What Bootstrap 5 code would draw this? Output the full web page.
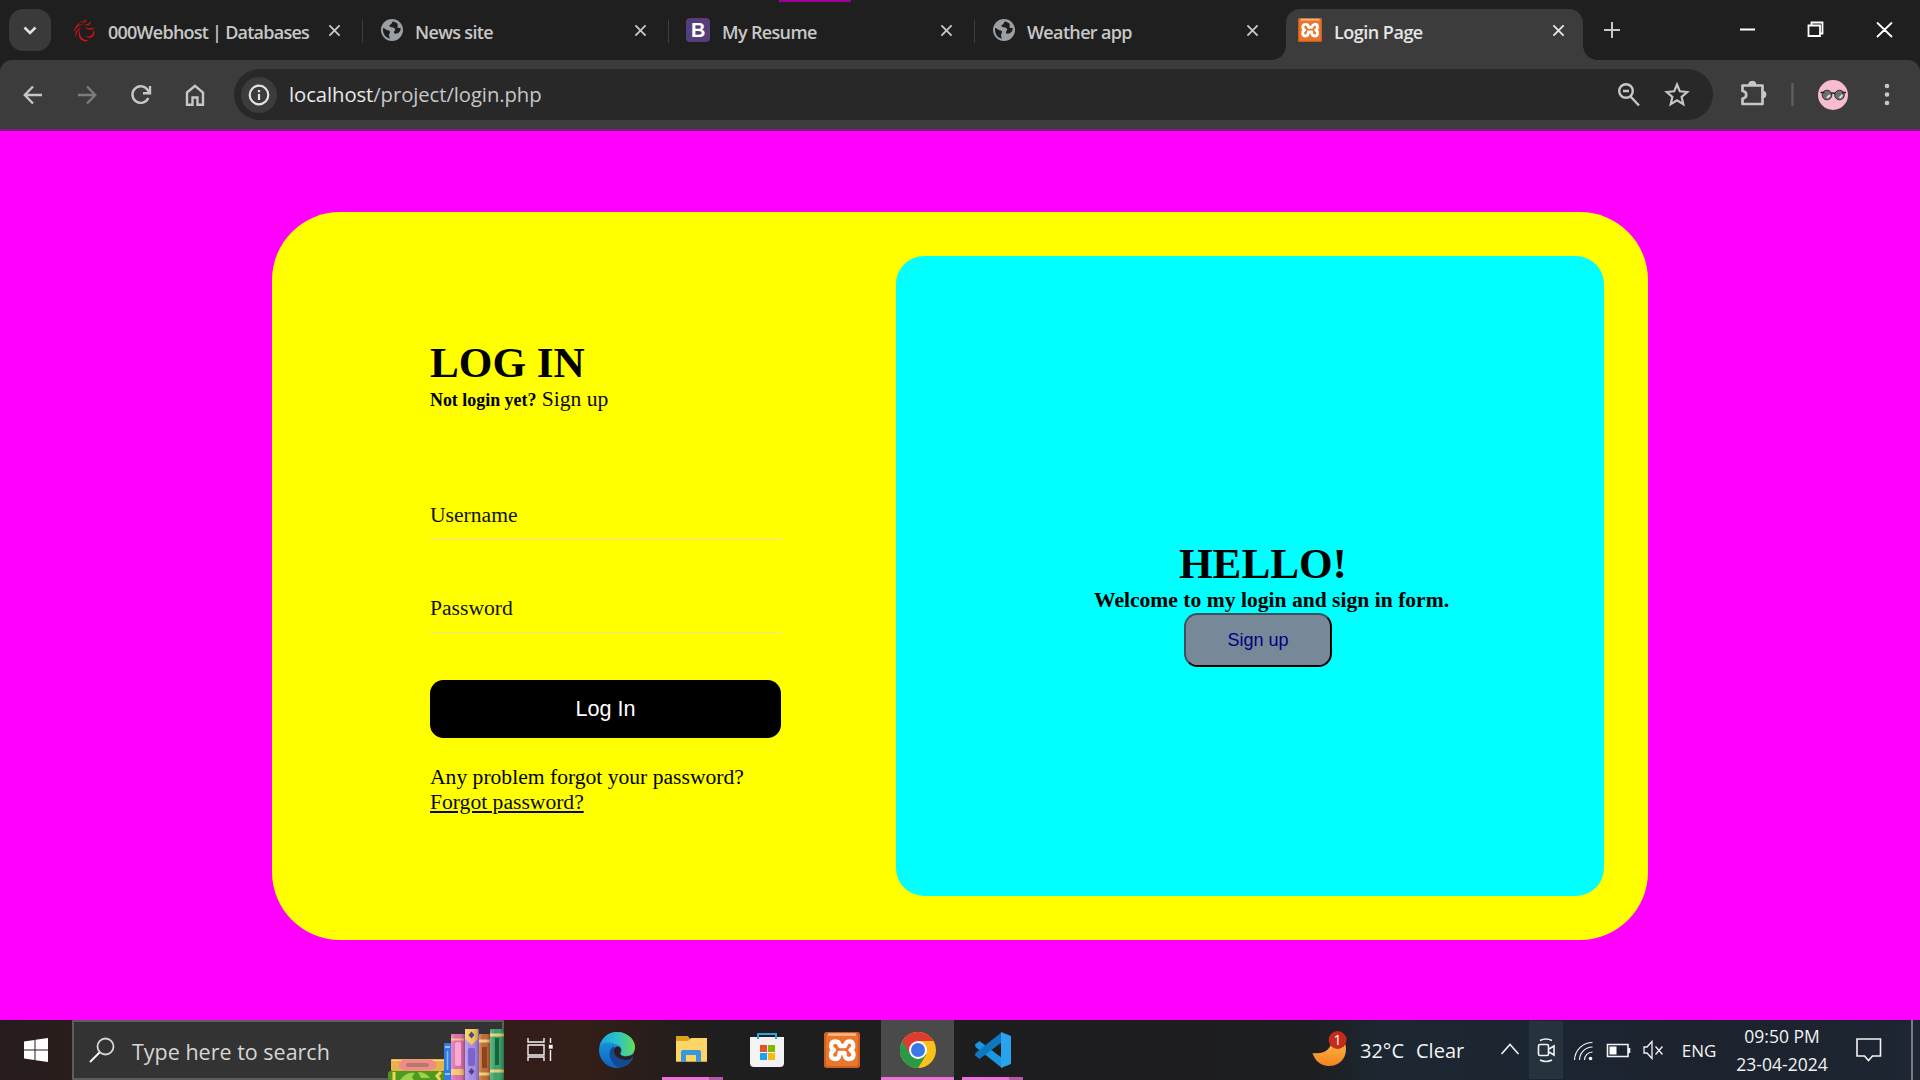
<!DOCTYPE html>
<html lang="en">
<head>
<meta charset="utf-8">
<title>Login Page</title>
<link href="https://cdn.jsdelivr.net/npm/bootstrap@5.3.0/dist/css/bootstrap.min.css" rel="stylesheet">
<style>
body{width:1920px;height:1080px;overflow:hidden;background:#f0f;font-family:"Open Sans","Noto Sans",sans-serif}
svg{display:block;flex:none}
.ln{fill:none;stroke:currentColor}
/* browser chrome */
.strip{height:60px;background:#1f1f1f;color:#c7c7c7}
.recording{top:0;left:779px;width:72px;height:2px;background:#9c0096}
.tabsearch{width:42px;height:42px;margin:9px 0 0 9px;border-radius:14px;background:#3a3a3a;color:#e3e3e3}
.btab{width:306px;height:51px;margin-top:9px;padding-left:18px;font-size:18px;font-weight:600;letter-spacing:-.65px;flex:none}
.btab .fav{margin-top:10px}
.btab .fav24{margin:9px 0 0 -1px}
.btab .tname{width:231px;flex:none;padding-left:12px;line-height:26px;margin-top:10px;white-space:nowrap}
.btab .shut{margin-top:15px}
.btab .rule{width:3px;height:24px;background:#3e3e3e;border-radius:2px;margin:10px 0 0 21px}
.btab.first{width:312px;padding-left:22px}
.btab.first .tname{width:232px;letter-spacing:-.76px}
.btab.current{width:297px;margin-left:5px;padding-left:13px;background:#3c3c3c;color:#e6e6e6;border-radius:14px 14px 0 0;position:relative;letter-spacing:-.5px}
.btab.current:before,.btab.current:after{content:"";position:absolute;bottom:0;width:14px;height:14px}
.btab.current:before{left:-14px;background:radial-gradient(circle at 0 0,#1f1f1f 13.5px,#3c3c3c 14px)}
.btab.current:after{right:-14px;background:radial-gradient(circle at 100% 0,#1f1f1f 13.5px,#3c3c3c 14px)}
.toolbar{height:71px;background:#3c3c3c;color:#c7c7c7;border-bottom:2px solid #7a1f7c;border-radius:12px 12px 0 0;padding-left:21px}
.cap{background:#1f1f1f}
.toolbar>.nav-ic{width:24px;margin-right:30px}
.omni{width:1479px;flex:none;height:51px;border-radius:26px;background:#282828;margin-left:-3px;padding-left:8px;font-size:20.3px}
.info{width:36px;height:36px;border-radius:50%;background:#3c3c3c;color:#e3e3e3;margin-left:-1px}
.url{width:1340px;padding-left:12px;line-height:30px;margin-top:-2px;color:#c7c7c7;letter-spacing:-.08px}
.url b{font-weight:400;color:#e8e8e8}
/* page */
.page{height:889px;background:#f0f;font-family:"Liberation Serif",serif;font-size:21.6px;line-height:25px;color:#000}
.panel{width:1376px;height:728px;border-radius:68px;background:#ff0;padding:44px}
.loginform{width:580px;padding:82px 0 0 114px}
.bigtitle{font-size:43.2px;line-height:50px;font-weight:700;margin:0;height:49px}
.hint{font-size:17.9px;font-weight:700}
.fieldbox{width:351px;height:37px;border-bottom:1.4px solid #e6e6a0;color:#111}
.loginbtn{width:351px;height:58px;border-radius:13.5px;background:#000;color:#fff;font:21.6px "Liberation Sans",sans-serif;border:0}
.forgot{color:#0a0a28}
.hello{width:708px;height:640px;border-radius:28px;background:#0ff;padding:283px 0 0 198px}
.signbtn{width:148px;height:54px;border:2.5px outset #000;border-color:#405058 #000 #000 #405058;border-radius:13.5px;background:#789;color:#000080;font:18px "Liberation Sans",sans-serif;margin-left:90px;padding:1px 0 0}
/* taskbar */
.task{height:60px;color:#f3f3f3;background:linear-gradient(90deg,#261c1d 0,#2a1d1c 72px,#321d19 510px,#331e18 590px,#241d1c 670px,#1e1e1f 740px,#1d1d1f 1170px,#1d1f22 1320px,#1c2731 1380px,#1b2632 1550px,#1c222e 1700px,#1d2632 1920px)}
.slot{height:60px;flex:none;display:flex;align-items:center;justify-content:center}
.find{width:432px;flex:none;height:60px;border:2px solid #5d5d5d;background:#333;padding-left:15px;color:#d6d6d6;font-size:21.5px}
.find .ask{width:272px;flex:none;padding-left:17px;line-height:30px;margin-top:3px;white-space:nowrap}
.run{box-shadow:inset 0 -3px #f06fdc}
.run2{background:linear-gradient(90deg,#f06fdc 0 47px,#b357a6 47px 61px) no-repeat 0 57px/61px 3px}
.wtext{font-size:20px;white-space:pre}
.clock{font-size:17.5px;line-height:28px;text-align:center;white-space:nowrap}
</style>
<script src="https://cdn.jsdelivr.net/npm/bootstrap@5.3.0/dist/js/bootstrap.bundle.min.js"></script>
</head>
<body class="d-flex flex-column m-0">
<svg width="0" height="0" class="position-absolute">
<defs>
<symbol id="x" viewBox="0 0 14 14"><path d="M1.500 1.500l11 11M12.500 1.500l-11 11" fill="none" stroke="currentColor" stroke-width="2"/></symbol>
<symbol id="globe" viewBox="0 0 22 22"><circle cx="11" cy="11" r="11" fill="#9aa0a6"/><path d="M2 9c2 0 3 2.200 5.500 2.500 1.500.2 2 1.500 1 3-.8 1.200-.5 3 .5 5C5 19 1.500 15.500 2 9zM12 2.500c-2 1-.5 2.500-2.500 3C8 6 8 7.500 9.500 8c2 .7 3.500.3 4.500 1.800 1 1.700-1.500 2.200-1 4 .4 1.200 2.500 1 4.200.2 2-1 2.800-3 2.300-5.500-1.500 1-3 .8-3-1 0-1.500 1-1.800-.5-3.200C15 3.500 13.500 2.800 12 2.500z" fill="#1f1f1f"/></symbol>
<symbol id="xampp" viewBox="0 0 36 36"><rect width="36" height="36" rx="3" fill="#e8762c"/><rect x="1" y="1" width="34" height="34" rx="3" fill="none" stroke="#c75a1a" stroke-width="1.500"/><path d="M5 2.500h26" stroke="#f7b98d" stroke-width="2.500" stroke-linecap="round"/><path d="M11.500 9.500c-5 0-6 6-1.500 8.500-4.500 2.500-4 9 1.500 9 3.500 0 4-3 4-6h5c0 4 1 6 4.500 6 5.500 0 6-6.500 1.500-9 4.500-2.500 3-9-1.500-8.500-3 .3-3.500 2-4 4.500h-5c-.5-3-1.500-4.500-4.500-4.500z" fill="none" stroke="#fff" stroke-width="4.300" stroke-linejoin="round"/></symbol>
</defs></svg>

<header class="flex-shrink-0 position-relative">
<div class="recording position-absolute"></div>
<div class="strip d-flex">
 <div class="tabsearch d-flex align-items-center justify-content-center"><svg width="14" height="9" viewBox="0 0 14 9"><path class="ln" stroke-width="2.500" d="M1.500 1.500L7 7l5.500-5.500"/></svg></div>
 <div class="btab first d-flex">
  <svg class="fav" width="23" height="23" viewBox="0 0 24 24" fill="#d01217"><path d="M7.500 11C6 17 9 22 17 22.500 9 26 3 18 7.500 11z"/><path d="M12.500 17.500C18 20 22 16 21.500 10.500 25 17 18 23 12.500 17.500z"/><path d="M22.500 8.500C20 12.500 14 12 12.500 7.500 15 10 19 10.300 22.500 8.500z"/><path d="M18.500 2.500C19 6 15 8 12 5.500 15 5.500 17 4.500 18.500 2.500z"/><path d="M14 1C13 3.500 11 4 9.500 4.500 11 3.500 11.500 2 12 1zM1 14C1 8 5 5 11 6 6 6.500 3 9 1 14zM2.500 19C2 14 4 10 8.500 9 5 11.500 4 14.500 2.500 19zM3 8C4 5 6 4 9 4.500 6.500 5 5 6 3 8zM6.500 3Q9 1.500 10.500 3.500 8.500 2.800 6.500 3z"/></svg>
  <span class="tname">000Webhost | Databases</span>
  <svg class="shut" width="13" height="13"><use href="#x"/></svg>
  <i class="rule"></i>
 </div>
 <div class="btab d-flex"><svg class="fav" width="22" height="22"><use href="#globe"/></svg><span class="tname">News site</span><svg class="shut" width="13" height="13"><use href="#x"/></svg><i class="rule"></i></div>
 <div class="btab d-flex"><svg class="fav24" width="24" height="24" viewBox="0 0 24 24"><rect width="24" height="24" rx="4" fill="#563d7c"/><text x="12" y="19" text-anchor="middle" font-family="Liberation Sans" font-size="20" font-weight="700" fill="#fff">B</text></svg><span class="tname" style="width:230px">My Resume</span><svg class="shut" width="13" height="13"><use href="#x"/></svg><i class="rule"></i></div>
 <div class="btab d-flex"><svg class="fav" width="22" height="22"><use href="#globe"/></svg><span class="tname">Weather app</span><svg class="shut" width="13" height="13"><use href="#x"/></svg></div>
 <div class="btab current d-flex"><svg class="fav24" width="24" height="24"><use href="#xampp"/></svg><span class="tname" style="width:230px">Login Page</span><svg class="shut" width="13" height="13"><use href="#x"/></svg></div>
 <div class="d-flex align-items-center"><svg width="336" height="60" viewBox="1584 0 336 60" class="ln" color="#fff"><path d="M1605 30h16M1613 22v16" stroke="#c7c7c7" stroke-width="2"/><path d="M1741 29.500h15" stroke-width="2"/><path d="M1809.500 25.500h11.500v10.500h-11.500zM1812.500 25v-2.500h11v11h-2.500M1878 22.500l15 14.500M1893 22.500l-15 14.500" stroke-width="1.800"/></svg></div>
</div>
<div class="cap"><div class="toolbar d-flex align-items-center">
 <svg class="nav-ic" width="24" height="24" viewBox="0 0 24 24"><path class="ln" stroke-width="2.400" d="M21 12H4M12 3.500L3.800 12l8.200 8.500"/></svg>
 <svg class="nav-ic" width="24" height="24" viewBox="0 0 24 24" color="#7c7c7c"><path class="ln" stroke-width="2.400" d="M3 12h17M12 3.500l8.200 8.500-8.200 8.500"/></svg>
 <svg class="nav-ic" width="24" height="24" viewBox="0 0 24 24"><path class="ln" stroke-width="2.400" d="M19.300 15A8.300 8.300 0 1 1 19 7.500L21 10M21 3v7.200h-7"/></svg>
 <svg class="nav-ic" width="24" height="24" viewBox="0 0 24 24"><path class="ln" stroke-width="2.400" d="M4 9.500L12 2.800l8 6.700V21.800h-5.500v-7.300h-5v7.300H4z"/></svg>
 <div class="omni d-flex align-items-center">
  <span class="info d-flex align-items-center justify-content-center"><svg width="22" height="22" viewBox="0 0 22 22"><circle class="ln" cx="11" cy="11" r="9.300" stroke-width="2.200"/><path class="ln" d="M11 10v6M11 6v2.200" stroke-width="2.200"/></svg></span>
  <span class="url"><b>localhost</b>/project/login.php</span>
  <svg width="75" height="26" viewBox="0 0 75 26"><path class="ln" stroke-width="2.400" d="M13.500 14.500l8.500 9M6 9h6"/><circle class="ln" cx="9" cy="9" r="6.800" stroke-width="2.400"/><path class="ln" stroke-width="2.200" d="M60 2.500l2.800 6.800 7.400.7-5.600 4.900 1.700 7.200-6.300-3.800-6.300 3.800 1.700-7.200-5.600-4.900 7.400-.7z"/></svg>
 </div>
 <svg width="207" height="50" viewBox="1713 70 207 50"><path class="ln" stroke-width="2.700" stroke-linejoin="round" d="M1742.500 85.500h20v18.500h-20v-5.500c5-.5 5-7 0-7.500z"/><path d="M1748.500 85a3.800 3.800 0 0 1 7.600 0zM1762.500 91a3.500 3.500 0 0 1 0 7z" fill="#c7c7c7" stroke="#c7c7c7"/><path d="M1792.500 83v23" stroke="#5c5c5c" stroke-width="2.500"/><circle cx="1833" cy="95" r="15" fill="#f8bbd0"/><g fill="#6a7074" stroke="#303030"><circle cx="1827" cy="95" r="4.800"/><circle cx="1839.500" cy="95" r="4.800"/></g><path d="M1827 98l3-3M1839.500 98l3-3" stroke="#ddd" stroke-width="2"/><path d="M1820.500 92.500h4M1831 93.500q2-1 4 0M1842 92.500h4" fill="none" stroke="#222" stroke-width="1.500"/><g fill="currentColor"><circle cx="1887" cy="86" r="2.300"/><circle cx="1887" cy="94.500" r="2.300"/><circle cx="1887" cy="103" r="2.300"/></g></svg>
</div></div>
</header>

<main class="page flex-shrink-0 d-flex align-items-center justify-content-center">
<div class="panel d-flex">
 <form class="loginform">
  <h1 class="bigtitle">LOG IN</h1>
  <div style="height:25px"><span class="hint">Not login yet?</span> <span class="forgot">Sign up</span></div>
  <div class="fieldbox" style="margin-top:91px">Username</div>
  <div class="fieldbox" style="margin-top:56px">Password</div>
  <button type="button" class="loginbtn d-block" style="margin-top:47px">Log In</button>
  <div style="margin-top:27px">Any problem forgot your password?</div>
  <a class="forgot text-decoration-underline">Forgot password?</a>
 </form>
 <section class="hello">
  <h1 class="bigtitle" style="padding-left:85px">HELLO!</h1>
  <div class="fw-bold">Welcome to my login and sign in form.</div>
  <button type="button" class="signbtn d-block">Sign up</button>
 </section>
</div>
</main>

<footer class="task flex-shrink-0 d-flex">
 <div class="slot" style="width:72px"><svg width="28" height="24" viewBox="-2 0 28 24" fill="#fff"><path d="M0 3.500l10.500-1.500v9.500H0zM11.500 1.800L24 0v11.500H11.500zM0 12.500h10.500V22L0 20.500zM11.500 12.500H24V24l-12.500-1.800z"/></svg></div>
 <div class="find d-flex align-items-center">
  <svg width="26" height="26" viewBox="0 0 26 26"><circle class="ln" cx="16.500" cy="9.500" r="8" stroke-width="1.800" stroke="#fff"/><path d="M10.500 15.500L1 25" stroke="#fff" stroke-width="1.800"/></svg>
  <span class="ask">Type here to search</span>
  <svg width="118" height="52" viewBox="387 1028 118 52" class="align-self-end" style="margin-bottom:-2px">
   <defs><linearGradient id="sh"><stop stop-color="#fff" stop-opacity=".25"/><stop offset=".4" stop-color="#fff" stop-opacity="0"/><stop offset="1" stop-color="#000" stop-opacity=".3"/></linearGradient></defs>
   <rect x="391" y="1059" width="54" height="12" rx="1" fill="#e6b34a"/><path d="M391 1060.500h54" stroke="#f7dc7e"/><path d="M403 1059.500h28l5 3v5l-5 3h-28l-4-3v-5z" fill="#f08b86"/><rect x="406" y="1063" width="23" height="4" rx="2" fill="#b47a70"/>
   <rect x="388" y="1071" width="57" height="9" rx="3" fill="#4f9a1e"/><path d="M400 1080q7-9 15-7-5 4-1 7zM418 1072q8 0 12 6h-9z" fill="#9bd24a"/><path d="M394 1072v8M441 1072l-4 4 3 4" stroke="#f1d35e" stroke-width="3" fill="none"/>
   <rect x="444" y="1043" width="7" height="37" rx="1" fill="#2f7de0"/><path d="M445 1047h5M445 1074h5" stroke="#8fc4ff" stroke-width="2"/><path d="M447.500 1051v19" stroke="#82b6f7" stroke-width="1.500"/>
   <rect x="451" y="1034" width="14" height="46" rx="1" fill="#e069ac"/><path d="M451 1039.500h13" stroke="#f6c56c" stroke-width="2"/><path d="M451 1072h13" stroke="#f6c56c" stroke-width="6"/><rect x="451" y="1034" width="14" height="46" fill="url(#sh)"/><rect x="455" y="1042" width="6" height="24" rx="2" fill="#f6aad0"/>
   <rect x="465" y="1029" width="14" height="51" rx="1" fill="#a58be8"/><path d="M465 1029h13v10l-6.500 6-6.500-6z" fill="#f3ca55"/><rect x="465" y="1029" width="14" height="51" fill="url(#sh)"/><path d="M471.500 1031.500l3 3.500-3 3.500-3-3.500zM471.500 1068l3 3.500-3 3.500-3-3.500z" fill="#574090"/><rect x="468" y="1048" width="7" height="18" rx="2" fill="#7c63cf"/>
   <rect x="479" y="1034" width="11" height="46" rx="1" fill="#c06a30"/><path d="M479 1041h11M479 1074h11" stroke="#f3cd70" stroke-width="3"/><rect x="479" y="1034" width="11" height="46" fill="url(#sh)"/><rect x="482" y="1047" width="5" height="21" fill="#8e451e"/>
   <rect x="490" y="1029" width="14" height="51" rx="2" fill="#35a065"/><path d="M490 1035h14M490 1071h14" stroke="#e9cf71" stroke-width="3"/><rect x="490" y="1029" width="14" height="51" fill="url(#sh)"/><rect x="495" y="1038" width="4" height="27" fill="#17643c"/>
  </svg>
 </div>
 <div class="slot" style="width:72px"><svg width="26" height="26" viewBox="527 1037 26 26" class="ln" stroke-width="1.400"><path d="M528 1038v4h16v-4M528 1061v-4h16v4M528 1045h16v10h-16zM550.500 1038v5M550.500 1050v11"/><rect x="549.500" y="1045.500" width="2.500" height="2.500" fill="#fff"/></svg></div>
 <div class="slot" style="width:82px"><svg width="36" height="36" viewBox="0 0 36 36"><defs><linearGradient id="e1" x2="1"><stop stop-color="#18a7e0"/><stop offset=".5" stop-color="#2bc3c9"/><stop offset="1" stop-color="#66dc55"/></linearGradient><linearGradient id="e2" y2="1" x2="0"><stop stop-color="#1fa2e2"/><stop offset="1" stop-color="#0e63c0"/></linearGradient></defs><path d="M18 0A18 18 0 1 0 33 28l3-13A18 18 0 0 0 18 0z" fill="url(#e2)"/><path d="M1 14C3 5 10 0 18 0c10 0 18 7 18 15 0 6-4 9-9 9-4 0-6-1-5-3 2-3 0-8-6-9C9 9 3 11 1 14z" fill="url(#e1)"/><path d="M15 14c-6 3-7 14 4 21.500 6 0 12-4 14.500-9C26 30 14 27 15 14z" fill="#14498f"/><path d="M15 17c2-4 7-3 7 1 0 3-2 3 0 5 4 3 9 1 13-1-1 3-2 3-3 5-9 3-18-2-17-10z" fill="#2b1d1a"/></svg></div>
 <div class="slot run2" style="width:61px;margin-left:4px"><svg width="34" height="28" viewBox="1 0 34 28"><path d="M0 0h13l2 3h17v23H0z" fill="#dda21c"/><path d="M0 5h13l3-3h16v23H0z" fill="#fbd666"/><path d="M6 26V16q0-2 2-2h16q2 0 2 2v10h-5v-7h-10v7z" fill="#3a96dd"/></svg></div>
 <div class="slot" style="width:88px"><svg width="36" height="36" viewBox="0 0 36 36"><path d="M9 7V2h18v5" fill="none" stroke="#2ba5df" stroke-width="2"/><path d="M1 5h34v26q0 4-4 4H5q-4 0-4-4z" fill="#f3f3f3"/><path d="M9 7V5M27 7V5" stroke="#2ba5df" stroke-width="2"/><path fill="#e8502a" d="M11 13h7v7h-7z"/><path fill="#7fba00" d="M19 13h7v7h-7z"/><path fill="#1fa0e8" d="M11 21h7v7h-7z"/><path fill="#fdb913" d="M19 21h7v7h-7z"/></svg></div>
 <div class="slot" style="width:62px"><svg width="36" height="36"><use href="#xampp"/></svg></div>
 <div class="slot run" style="width:73px;background-color:#4a4a4a;margin-left:8px"><svg width="36" height="36" viewBox="0 0 36 36"><circle cx="18" cy="18" r="18" fill="#fbc116"/><path d="M18 18L2.400 9A18 18 0 0 0 18 36l8-13z" fill="#2b9a48"/><path d="M18 18V9h15.600A18 18 0 0 0 2.400 9L10 22z" fill="#df3b30"/><circle cx="18" cy="18" r="9" fill="#fff"/><circle cx="18" cy="18" r="7" fill="#3a78e8"/></svg></div>
 <div class="slot run2" style="width:61px;margin-left:8px"><svg width="36" height="36" viewBox="0 0 36 36"><path d="M0 12.500L4.500 9 27 26v10L.5 15z" fill="#1b97df"/><path d="M0 23.500L4.500 27 27 10V0L.5 21z" fill="#0d78c0"/><path d="M26 0l10 4v28l-10 4z" fill="#2aa3ee"/></svg></div>
 <div class="slot" style="width:38px;margin-left:287px"><svg width="38" height="42" viewBox="1311 1030 38 42"><defs><linearGradient id="mn" x2="0" y2="1"><stop stop-color="#fbc04a"/><stop offset="1" stop-color="#f58220"/></linearGradient></defs><path d="M1313.500 1054C1316 1062 1322 1067 1330 1067 1340 1067 1347 1060 1347 1050Q1347 1043 1341 1038L1333 1040C1333 1049 1326 1056 1313.500 1054z" fill="url(#mn)"/><circle cx="1338.600" cy="1041" r="9" fill="#c42b1c"/><text x="1338.600" y="1046" text-anchor="middle" font-size="14" font-family="Open Sans" fill="#fff">1</text></svg></div>
 <div class="slot wtext justify-content-start" style="width:147px;padding:2px 0 0 12px"><span style="width:56px">32°C</span><span>Clear</span></div>
 <svg width="180" height="60" viewBox="1495 1020 180 60" class="ln" stroke="#f3f3f3" stroke-width="1.600"><path fill="#26323d" stroke="none" d="M1529 1021h34v58h-34z"/><path d="M1501.500 1054l8.500-9.500 8.500 9.500"/><rect x="1538.500" y="1044.500" width="10" height="11" rx="1.500"/><path d="M1549 1049l5-3v9l-5-3M1540 1040.500q6-3 12 0M1540 1060q6 3 12 0"/><g stroke-width="1.200"><path d="M1574.500 1060a18 18 0 0 1 18-17.500M1579.500 1060a13 13 0 0 1 13-13M1584.500 1060a8 8 0 0 1 8-8"/></g><circle cx="1590.500" cy="1058.500" r="1.800" fill="#fff" stroke="none"/><path d="M1607.500 1044.500h20.500v12h-20.500zM1629.500 1048v5"/><path d="M1609.500 1046.500h7v8h-7z" fill="#fff" stroke="none"/><path d="M1644 1047h3l5-5.500v17l-5-5.500h-3zM1655.500 1046.500l7 8M1662.500 1046.500l-7 8" stroke-width="1.300"/></svg>
 <div class="slot" style="width:48px;font-size:17px;padding-top:1px">ENG</div>
 <div class="clock" style="width:118px;padding-top:2px"><div>09:50 PM</div><div>23-04-2024</div></div>
 <div class="slot" style="width:56px"><svg width="26" height="26" viewBox="0 0 26 26"><path class="ln" stroke-width="1.600" d="M1 2h23.500v17h-8l-4 4.500-4-4.500H1z"/></svg></div>
 <div class="border-start border-2" style="width:8px;margin-left:14px;border-color:#777c85!important"></div>
</footer>
</body>
</html>
